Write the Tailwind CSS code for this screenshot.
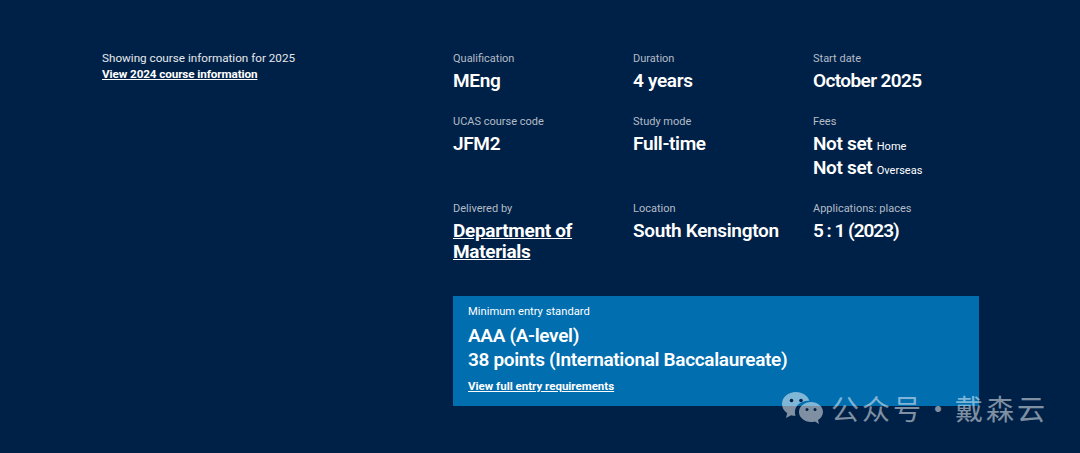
<!DOCTYPE html>
<html lang="en">
<head>
    <meta charset="UTF-8">
    <meta name="viewport" content="width=device-width, initial-scale=1.0">
    <title>Course information</title>
    <script src="https://cdn.jsdelivr.net/npm/@tailwindcss/browser@4"></script>
</head>
<body class="bg-[#002147] text-white font-['Roboto','Noto_Sans',sans-serif] overflow-hidden">
    <div class="relative h-[453px] flex pl-[102px] pt-[50px]">
        <!-- Year switch -->
        <div class="w-[351px] shrink-0 text-[11.7px] leading-4">
            <p class="text-[#e6e9ed]">Showing course information for 2025</p>
            <a href="#" class="font-bold underline tracking-[-0.1px]">View 2024 course information</a>
        </div>

        <!-- Course facts -->
        <div class="w-[526px]">
            <div class="grid grid-cols-[180px_180px_166px] pt-px">
                <div class="h-[63px]">
                    <p class="text-[11px] leading-[14px] text-[#b4bcc8] pt-px">Qualification</p>
                    <p class="text-[19px] leading-[22px] font-semibold tracking-[-0.33px] mt-[4px]">MEng</p>
                </div>
                <div class="h-[63px]">
                    <p class="text-[11px] leading-[14px] text-[#b4bcc8] pt-px">Duration</p>
                    <p class="text-[19px] leading-[22px] font-semibold tracking-[-0.33px] mt-[4px]">4 years</p>
                </div>
                <div class="h-[63px]">
                    <p class="text-[11px] leading-[14px] text-[#b4bcc8] pt-px">Start date</p>
                    <p class="text-[19px] leading-[22px] font-semibold tracking-[-0.6px] mt-[4px]">October 2025</p>
                </div>

                <div class="h-[87px]">
                    <p class="text-[11px] leading-[14px] text-[#b4bcc8] pt-px">UCAS course code</p>
                    <p class="text-[19px] leading-[22px] font-semibold tracking-[-0.33px] mt-[4px]">JFM2</p>
                </div>
                <div class="h-[87px]">
                    <p class="text-[11px] leading-[14px] text-[#b4bcc8] pt-px">Study mode</p>
                    <p class="text-[19px] leading-[22px] font-semibold tracking-[-0.33px] mt-[4px]">Full-time</p>
                </div>
                <div class="h-[87px]">
                    <p class="text-[11px] leading-[14px] text-[#b4bcc8] pt-px">Fees</p>
                    <p class="text-[19px] leading-[24px] font-semibold tracking-[-0.33px] mt-[3px]">Not set <span class="text-[11px] leading-none font-normal tracking-normal">Home</span></p>
                    <p class="text-[19px] leading-[24px] font-semibold tracking-[-0.33px]">Not set <span class="text-[11px] leading-none font-normal tracking-normal">Overseas</span></p>
                </div>

                <div class="h-[95px]">
                    <p class="text-[11px] leading-[14px] text-[#b4bcc8] pt-px">Delivered by</p>
                    <a href="#" class="block text-[19px] leading-[21px] font-bold tracking-[-0.33px] underline mt-[4px]">Department of<br>Materials</a>
                </div>
                <div class="h-[95px]">
                    <p class="text-[11px] leading-[14px] text-[#b4bcc8] pt-px">Location</p>
                    <p class="text-[19px] leading-[22px] font-semibold tracking-[-0.33px] mt-[4px]">South Kensington</p>
                </div>
                <div class="h-[95px]">
                    <p class="text-[11px] leading-[14px] text-[#b4bcc8] pt-px">Applications: places</p>
                    <p class="text-[19px] leading-[22px] font-semibold tracking-[-1px] mt-[4px]">5 : 1 (2023)</p>
                </div>
            </div>

            <!-- Entry standard -->
            <div class="h-[110px] bg-[#006eaf] px-[15px] pt-[9px]">
                <p class="text-[11.2px] leading-[14px]">Minimum entry standard</p>
                <p class="text-[19px] leading-6 font-semibold tracking-[-0.33px] mt-[5px]">AAA (A-level)</p>
                <p class="text-[19px] leading-6 font-semibold tracking-[-0.33px]">38 points (International Baccalaureate)</p>
                <a href="#" class="block text-[11.5px] leading-4 font-bold underline mt-[6px]">View full entry requirements</a>
            </div>
        </div>

        <!-- Watermark over the page -->
        <div class="absolute left-[782px] top-[390px] flex items-start gap-[7px] text-white/50">
            <svg class="mt-[2px]" width="42" height="34" viewBox="0 0 42 34" fill="currentColor">
                <path d="M14 0C6 0 0 5.400 0 12c0 3.800 2 7 5.200 9.200L4 26l5.200-2.800c1.400.4 2.800.6 4.300.6-.4-1.200-.6-2.400-.6-3.600 0-6.400 5.900-11.400 13.300-11.400h1.200C25.800 3.600 20.400 0 14 0z"/>
                <path d="M41 20c0-5.600-5.500-10-12-10s-12 4.400-12 10 5.500 10 12 10c1.400 0 2.700-.2 3.900-.6L37 32l-1-4c3.100-1.900 5-4.800 5-8z"/>
                <circle cx="9.500" cy="8.500" r="1.800" fill="#002147"/>
                <circle cx="19" cy="8.500" r="1.800" fill="#002147"/>
                <circle cx="25" cy="17.500" r="1.500" fill="#002147"/>
                <circle cx="33" cy="17.500" r="1.500" fill="#002147"/>
            </svg>
            <span class="text-[28px] leading-9 tracking-[3px] font-['Noto_Sans_CJK_SC',sans-serif]">公众号·戴森云</span>
        </div>
    </div>
</body>
</html>
